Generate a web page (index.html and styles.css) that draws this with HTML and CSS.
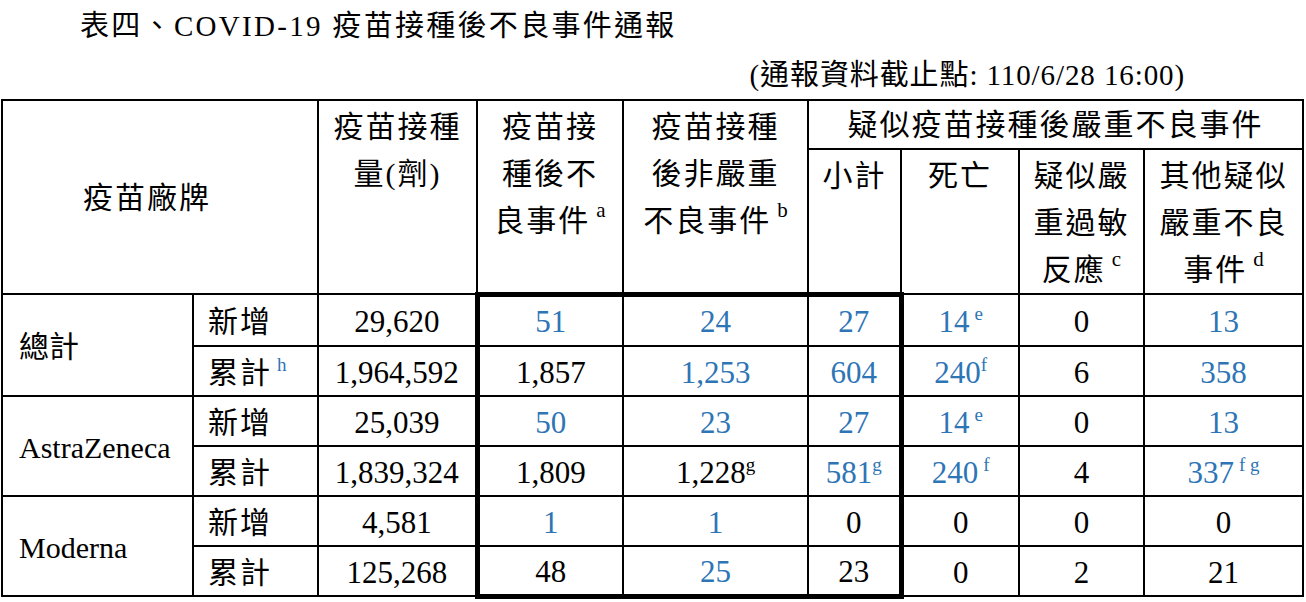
FILE: index.html
```html
<!DOCTYPE html>
<html lang="zh-Hant">
<head>
<meta charset="utf-8">
<title>表四、COVID-19 疫苗接種後不良事件通報</title>
<link rel="stylesheet" href="styles.css">
</head>
<body>
<div class="title">表四、COVID-19 疫苗接種後不良事件通報</div>
<div class="note">(通報資料截止點: 110/6/28 16:00)</div>
<table class="grid">
  <colgroup>
    <col class="w1"><col class="w2"><col class="w3"><col class="w4"><col class="w5"><col class="w6"><col class="w7"><col class="w8"><col class="w9">
  </colgroup>
  <thead>
    <tr class="h1">
      <th class="brand" colspan="2" rowspan="2">疫苗廠牌</th>
      <th class="top" rowspan="2">疫苗接種<br>量(劑)</th>
      <th class="top" rowspan="2">疫苗接<br>種後不<br>良事件<span class="sup hs">a</span></th>
      <th class="top" rowspan="2">疫苗接種<br>後非嚴重<br>不良事件<span class="sup hs">b</span></th>
      <th class="mid" colspan="4">疑似疫苗接種後嚴重不良事件</th>
    </tr>
    <tr class="h2">
      <th class="top">小計</th>
      <th class="top">死亡</th>
      <th class="top">疑似嚴<br>重過敏<br>反應<span class="sup hs">c</span></th>
      <th class="top">其他疑似<br>嚴重不良<br>事件<span class="sup hs">d</span></th>
    </tr>
  </thead>
  <tbody>
    <tr class="r first">
      <td class="name" rowspan="2">總計</td>
      <td class="kind">新增</td>
      <td>29,620</td>
      <td class="bl bt b">51</td>
      <td class="bt b">24</td>
      <td class="br bt b">27</td>
      <td class="b">14<span class="sup sp">e</span></td>
      <td>0</td>
      <td class="b">13</td>
    </tr>
    <tr class="r">
      <td class="kind">累計<span class="sup sp b">h</span></td>
      <td>1,964,592</td>
      <td class="bl">1,857</td>
      <td class="b">1,253</td>
      <td class="br b">604</td>
      <td class="b">240<span class="sup">f</span></td>
      <td>6</td>
      <td class="b">358</td>
    </tr>
    <tr class="r">
      <td class="name" rowspan="2">AstraZeneca</td>
      <td class="kind">新增</td>
      <td>25,039</td>
      <td class="bl b">50</td>
      <td class="b">23</td>
      <td class="br b">27</td>
      <td class="b">14<span class="sup sp">e</span></td>
      <td>0</td>
      <td class="b">13</td>
    </tr>
    <tr class="r">
      <td class="kind">累計</td>
      <td>1,839,324</td>
      <td class="bl">1,809</td>
      <td>1,228<span class="sup">g</span></td>
      <td class="br b">581<span class="sup">g</span></td>
      <td class="b">240<span class="sup sp">f</span></td>
      <td>4</td>
      <td class="b">337<span class="sup sp">f g</span></td>
    </tr>
    <tr class="r">
      <td class="name" rowspan="2">Moderna</td>
      <td class="kind">新增</td>
      <td>4,581</td>
      <td class="bl b">1</td>
      <td class="b">1</td>
      <td class="br">0</td>
      <td>0</td>
      <td>0</td>
      <td>0</td>
    </tr>
    <tr class="r">
      <td class="kind">累計</td>
      <td>125,268</td>
      <td class="bl bb">48</td>
      <td class="bb b">25</td>
      <td class="br bb">23</td>
      <td>0</td>
      <td>2</td>
      <td>21</td>
    </tr>
  </tbody>
</table>
</body>
</html>
```

FILE: styles.css
```css
html, body {
  margin: 0;
  padding: 0;
  background: #ffffff;
  color: #000000;
  font-family: "Liberation Serif", "Noto Sans CJK TC", serif;
}

.title {
  padding: 6px 0 0 80px;
  height: 40px;
  line-height: 40px;
  font-size: 29px;
  letter-spacing: 2.3px;
}

.note {
  margin-top: 9px;
  height: 40px;
  line-height: 40px;
  text-align: right;
  padding-right: 121px;
  font-size: 29px;
  letter-spacing: 0.9px;
}

.grid {
  margin: 4px 0 0 1px;
  border-collapse: collapse;
  table-layout: fixed;
  width: 1301px;
}

.w1 { width: 191px; }
.w2 { width: 125px; }
.w3 { width: 159px; }
.w4 { width: 146px; }
.w5 { width: 185px; }
.w6 { width: 93px; }
.w7 { width: 118px; }
.w8 { width: 125px; }
.w9 { width: 159px; }

.grid th,
.grid td {
  border: 2px solid #000;
  padding: 0;
  font-weight: normal;
  text-align: center;
  vertical-align: middle;
  white-space: nowrap;
}

.grid th {
  font-size: 30px;
  letter-spacing: 2px;
  line-height: 47px;
}

.grid th.top {
  vertical-align: top;
  padding-top: 2px;
}

.grid th.brand {
  text-align: left;
  padding-left: 80px;
}

.grid td {
  font-size: 31px;
  line-height: 36px;
  padding-top: 3px;
}

.h1 { height: 49px; }
.h2 { height: 145px; }
.r { height: 50px; }
.r.first { height: 52px; }

.grid td.name {
  text-align: left;
  padding-left: 16px;
  font-size: 30px;
}

.grid td.kind {
  text-align: left;
  padding-left: 14px;
  font-size: 30px;
  letter-spacing: 2px;
}

.grid td.bl { border-left: 5px solid #000; }
.grid td.br { border-right: 5px solid #000; }
.grid td.bt { border-top: 5px solid #000; }
.grid td.bb { border-bottom: 5px solid #000; }

.b { color: #2e75b6; }

.sup {
  font-family: "Liberation Serif", serif;
  font-size: 19px;
  vertical-align: 12px;
  line-height: 0;
  letter-spacing: 0;
}

.sp { margin-left: 5px; }

.hs {
  font-size: 21px;
  margin-left: 6px;
  vertical-align: 14px;
}
```
